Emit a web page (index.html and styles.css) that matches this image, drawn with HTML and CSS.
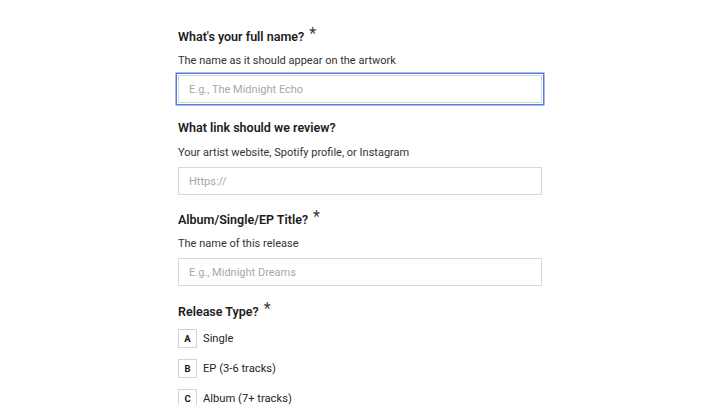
FILE: index.html
```html
<!DOCTYPE html>
<html lang="en">
<head>
<meta charset="utf-8">
<title>Submission form</title>
<link rel="stylesheet" href="styles.css">
</head>
<body>
<form class="form">
  <div class="group">
    <label class="label" for="name">What's your full name?<span class="req">*</span></label>
    <p class="help">The name as it should appear on the artwork</p>
    <input class="input input-focus" id="name" type="text" placeholder="E.g., The Midnight Echo">
  </div>
  <div class="group">
    <label class="label" for="link">What link should we review?</label>
    <p class="help">Your artist website, Spotify profile, or Instagram</p>
    <input class="input" id="link" type="text" placeholder="Https://">
  </div>
  <div class="group">
    <label class="label" for="title">Album/Single/EP Title?<span class="req">*</span></label>
    <p class="help">The name of this release</p>
    <input class="input" id="title" type="text" placeholder="E.g., Midnight Dreams">
  </div>
  <div class="group">
    <div class="label">Release Type?<span class="req">*</span></div>
    <div class="options">
      <div class="option"><span class="key">A</span><span class="opt-text">Single</span></div>
      <div class="option"><span class="key">B</span><span class="opt-text">EP (3-6 tracks)</span></div>
      <div class="option"><span class="key">C</span><span class="opt-text">Album (7+ tracks)</span></div>
    </div>
  </div>
</form>
</body>
</html>
```
FILE: styles.css
```css
html, body {
  margin: 0;
  padding: 0;
  background: #ffffff;
}
body {
  font-family: "Roboto", "Noto Sans", sans-serif;
  color: #161616;
}
.form {
  width: 364px;
  margin: 0 auto;
  padding-top: 26px;
}
.group {
  display: flex;
  flex-direction: column;
  margin-bottom: 15px;
}
.group:nth-child(2) {
  margin-bottom: 14px;
}
.label {
  display: block;
  font-size: 12.5px;
  font-weight: 600;
  line-height: 20px;
  height: 20px;
  margin-bottom: 6px;
  color: #1c1c1c;
}
.req {
  display: inline-block;
  font-size: 16px;
  font-weight: 400;
  color: #393939;
  margin-left: 5px;
  position: relative;
  top: -2px;
}
.help {
  margin: 0 0 5px 0;
  font-size: 11px;
  line-height: 18px;
  color: #333333;
}
.input {
  box-sizing: border-box;
  width: 364px;
  height: 28px;
  border: 1px solid #d8d8d8;
  border-radius: 0;
  padding: 0 10px;
  font-family: inherit;
  font-size: 11px;
  color: #161616;
  background: #fff;
  outline: none;
}
.input::placeholder {
  color: #a8a8a8;
}
.input-focus {
  box-shadow: 0 0 0 1px #ffffff, 0 0 0 2.5px #4f7fd9;
}
.options {
  display: flex;
  flex-direction: column;
  gap: 11px;
  margin-top: 2px;
}
.option {
  display: flex;
  align-items: center;
  height: 19px;
}
.key {
  box-sizing: border-box;
  width: 19px;
  height: 19px;
  border: 1px solid #d4d4d4;
  display: flex;
  align-items: center;
  justify-content: center;
  font-size: 9.5px;
  font-weight: 700;
  color: #161616;
}
.opt-text {
  margin-left: 6px;
  font-size: 11.2px;
  color: #262626;
}
```
